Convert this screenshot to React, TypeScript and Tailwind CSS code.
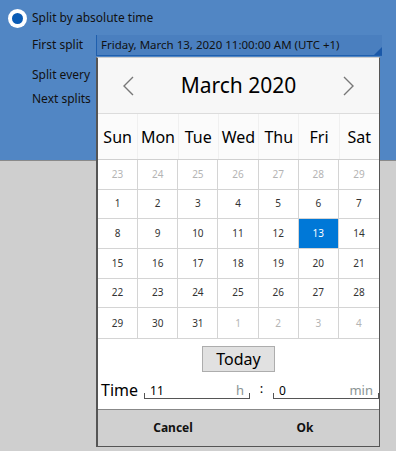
import React from 'react'

const dayNames = ['Sun', 'Mon', 'Tue', 'Wed', 'Thu', 'Fri', 'Sat']

const weeks: { d: number; muted?: boolean }[][] = [
  [23, 24, 25, 26, 27, 28, 29].map(d => ({ d, muted: true })),
  [1, 2, 3, 4, 5, 6, 7].map(d => ({ d })),
  [8, 9, 10, 11, 12, 13, 14].map(d => ({ d })),
  [15, 16, 17, 18, 19, 20, 21].map(d => ({ d })),
  [22, 23, 24, 25, 26, 27, 28].map(d => ({ d })),
  [
    { d: 29 },
    { d: 30 },
    { d: 31 },
    { d: 1, muted: true },
    { d: 2, muted: true },
    { d: 3, muted: true },
    { d: 4, muted: true },
  ],
]

function TimeInput({ value, unit }: { value: string; unit: string }) {
  return (
    <div className="relative w-[106px] h-[16px] flex items-end justify-between border-b border-[#555] px-[6px] pb-[1px]">
      <span className="absolute left-0 bottom-0 w-px h-[5px] bg-[#555]" />
      <span className="absolute right-0 bottom-0 w-px h-[5px] bg-[#555]" />
      <span className="text-[12px] leading-none text-black">{value}</span>
      <span className="text-[13px] leading-none text-[#8a9494]">{unit}</span>
    </div>
  )
}

export default function App() {
  return (
    <div
      className="relative w-[396px] h-[451px] overflow-hidden bg-[#cfcfcf]"
      style={{ fontFamily: '"Noto Sans", "Open Sans", sans-serif' }}
    >
      {/* Split settings */}
      <div className="h-[161px] bg-[#5186c4] border-b border-[#8a8a8a] text-[12px] text-[#111]">
        <div className="h-[34px] flex items-center pl-[8px] pt-[2px]">
          <div className="w-[19px] h-[19px] rounded-full bg-white flex items-center justify-center">
            <div className="w-[11px] h-[11px] rounded-full bg-[#0a5bb5]" />
          </div>
          <span className="ml-[5px]">Split by absolute time</span>
        </div>
        <div className="h-[22px] flex items-center">
          <span className="w-[96px] pl-[32px]">First split</span>
          <div className="relative w-[286px] h-[21px] flex items-center pl-[4px] bg-[#4a7fbf] border-l border-b border-[#1f5fae] text-[11.5px]">
            Friday, March 13, 2020 11:00:00 AM (UTC +1)
            <div className="absolute right-0 bottom-0 w-0 h-0 border-l-[8px] border-l-transparent border-b-[8px] border-b-[#1a58a8]" />
          </div>
        </div>
        <div className="h-[38px] flex items-center pl-[32px]">Split every</div>
        <div className="h-[10px] flex items-center pl-[32px]">Next splits</div>
      </div>

      {/* Date picker popup */}
      <div className="absolute left-[96px] top-[57px] w-[284px] border-l-2 border-r border-b border-l-[#555] border-r-[#555] border-b-[#555] border-t border-t-[#cfcfcf] bg-white">
        <div className="h-[56px] flex items-center justify-between bg-[#f7f7f7] border-b border-[#dcdcdc] px-[24px]">
          <svg width="12" height="20" viewBox="0 0 12 20">
            <path d="M11 1 L2 10 L11 19" fill="none" stroke="#777" strokeWidth="1.4" />
          </svg>
          <span className="text-[21px] text-black">March 2020</span>
          <svg width="12" height="20" viewBox="0 0 12 20">
            <path d="M1 1 L10 10 L1 19" fill="none" stroke="#777" strokeWidth="1.4" />
          </svg>
        </div>
        <div className="h-[46px] w-[281px] grid grid-cols-7 gap-x-px bg-[#f0f0f0] border-b border-[#d0d0d0]">
          {dayNames.map(n => (
            <div key={n} className="flex items-center justify-center bg-[#fbfbfb] text-[16px] text-black">
              {n}
            </div>
          ))}
        </div>
        <div className="grid grid-cols-7 grid-rows-6 h-[178px] w-[281px]">
          {weeks.map((w, r) =>
            w.map((c, i) => {
              const sel = r === 2 && i === 5
              return (
                <div
                  key={`${r}-${i}`}
                  className={`flex items-center justify-center text-[10px] ${i < 6 ? 'border-r' : ''} ${r < 5 ? 'border-b' : ''} border-[#d4d4d4] ${
                    sel ? 'bg-[#0078d7] text-white' : c.muted ? 'text-[#b4b4b4]' : 'text-[#333]'
                  }`}
                >
                  {c.d}
                </div>
              )
            })
          )}
        </div>
        <div className="h-[71px] border-t border-[#d4d4d4] flex flex-col items-center">
          <button className="mt-[7px] w-[73px] h-[26px] bg-[#e1e1e1] border border-[#adadad] text-[16px] text-black leading-none">
            Today
          </button>
          <div className="self-stretch flex items-end mt-[10px] pl-[3px]">
            <span className="text-[16px] leading-none text-black mr-[6px] mb-[1px]">Time</span>
            <TimeInput value="11" unit="h" />
            <span className="w-[23px] text-center text-[13px] leading-none text-black mb-[4px]">:</span>
            <TimeInput value="0" unit="min" />
          </div>
        </div>
        <div className="h-[37px] flex items-center bg-[#d0d0d0] border-t border-[#888] pl-[9px] pr-[8px] text-[12px] font-bold text-[#111]">
          <div className="flex-1 text-center">Cancel</div>
          <div className="flex-1 text-center">Ok</div>
        </div>
      </div>
    </div>
  )
}
